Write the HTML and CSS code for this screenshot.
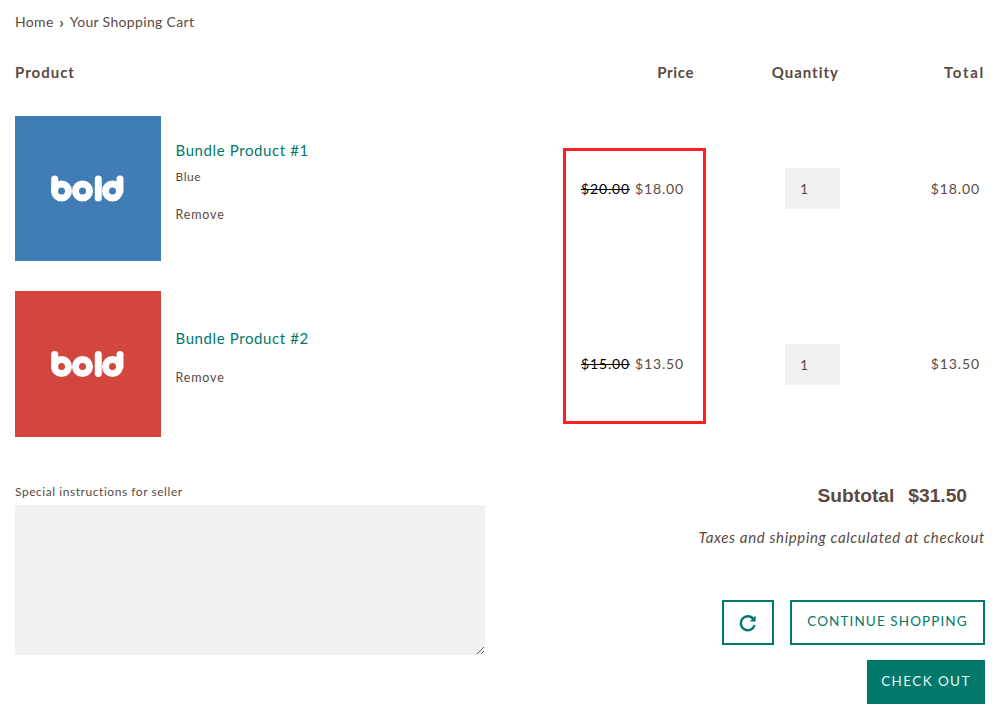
FILE: index.html
```html
<!DOCTYPE html>
<html lang="en">
<head>
<meta charset="utf-8">
<title>Your Shopping Cart</title>
<link rel="stylesheet" href="styles.css">
</head>
<body>
<main class="page">
  <nav class="crumbs"><a>Home</a><span class="sep">›</span><span>Your Shopping Cart</span></nav>
  <section class="cart">
    <div class="head">Product</div>
    <div class="head right price-head">Price</div>
    <div class="head right qty-head">Quantity</div>
    <div class="head right total-head">Total</div>

    <div class="product">
      <svg class="thumb blue" viewBox="0 0 146 145" role="img" aria-label="bold logo">
        <g class="logo">
          <circle cx="46.5" cy="75" r="7"/><line x1="39.7" y1="63" x2="39.7" y2="75"/>
          <circle cx="67.5" cy="75" r="7"/>
          <line x1="83.3" y1="63" x2="83.3" y2="82"/>
          <circle cx="97.5" cy="75" r="7"/><line x1="105" y1="63" x2="105" y2="75"/>
        </g>
      </svg>
      <div class="info">
        <a class="name">Bundle Product #1</a>
        <div class="variant">Blue</div>
        <a class="remove">Remove</a>
      </div>
    </div>
    <div class="price"><s>$20.00</s> <span>$18.00</span></div>
    <div class="qty"><input class="qty-input" value="1" aria-label="Quantity"></div>
    <div class="total">$18.00</div>

    <div class="product">
      <svg class="thumb red" viewBox="0 0 146 145" role="img" aria-label="bold logo">
        <g class="logo">
          <circle cx="46.5" cy="75" r="7"/><line x1="39.7" y1="63" x2="39.7" y2="75"/>
          <circle cx="67.5" cy="75" r="7"/>
          <line x1="83.3" y1="63" x2="83.3" y2="82"/>
          <circle cx="97.5" cy="75" r="7"/><line x1="105" y1="63" x2="105" y2="75"/>
        </g>
      </svg>
      <div class="info">
        <a class="name">Bundle Product #2</a>
        <a class="remove">Remove</a>
      </div>
    </div>
    <div class="price"><s>$15.00</s> <span>$13.50</span></div>
    <div class="qty"><input class="qty-input" value="1" aria-label="Quantity"></div>
    <div class="total">$13.50</div>

    <div class="highlight"></div>
  </section>

  <section class="foot">
    <div class="note">
      <label class="note-label" for="note">Special instructions for seller</label>
      <textarea id="note" class="note-box"></textarea>
    </div>
    <div class="summary">
      <div class="subtotal"><span>Subtotal</span><span>$31.50</span></div>
      <p class="taxes">Taxes and shipping calculated at checkout</p>
      <div class="actions">
        <button class="btn icon-btn" aria-label="Update cart">
          <svg class="refresh" viewBox="0 0 18 18">
            <path d="M14.6 5.2A7 7 0 1 0 15.6 11"/>
            <polygon points="16.6,1.4 16.6,7.4 10.6,7.4"/>
          </svg>
        </button>
        <button class="btn wide">Continue Shopping</button>
      </div>
      <button class="btn solid">Check Out</button>
    </div>
  </section>
</main>
</body>
</html>
```
FILE: styles.css
```css
* { box-sizing: border-box; }
html, body { margin: 0; padding: 0; background: #fff; }
body {
  font-family: "Lato", "Liberation Sans", sans-serif;
  color: #5a4a42;
  font-size: 14px;
}
.page { position: relative; padding: 0 20px 0 15px; height: 717px; overflow: hidden; }
.crumbs { display: flex; gap: 3px; height: 57px; padding-top: 13px; line-height: 18px; font-size: 14px; letter-spacing: .33px; }
.sep { font-weight: 700; font-size: 16px; width: 10px; text-align: center; }
.cart {
  position: relative;
  display: grid;
  grid-template-columns: 525px 154px 146px 145px;
  grid-template-rows: 29px 145px 146px;
  row-gap: 30px;
}
.head { font-weight: 700; font-size: 15px; letter-spacing: 1px; line-height: 20px; padding-top: 5px; }
.right { text-align: right; }
.price-head { letter-spacing: .6px; }
.qty-head { padding-right: 1px; }
.total-head { letter-spacing: 1.7px; }
.product { display: flex; align-items: center; gap: 14.5px; }
.thumb { display: block; width: 146px; height: 100%; flex: none; }
.blue { background: #407cb6; }
.red { background: #d2463f; }
.logo { fill: none; stroke: #fff; stroke-width: 7; stroke-linecap: round; }
.info { display: flex; flex-direction: column; align-items: flex-start; padding-bottom: 15px; }
.name { color: #00796b; font-size: 15px; letter-spacing: .6px; line-height: 20px; }
.variant { font-size: 12px; letter-spacing: .5px; line-height: 16px; margin-top: 9px; }
.remove { font-size: 12.5px; letter-spacing: .85px; line-height: 16px; margin-top: 22px; }
.price, .total, .qty { display: flex; align-items: center; justify-content: flex-end; }
.price { gap: 5px; padding: 0 10px 1px 0; font-size: 14px; letter-spacing: .85px; }
.price s { color: #000; }
.total { padding: 0 5px 1px 0; font-size: 14px; letter-spacing: .9px; }
.qty-input {
  width: 55px; height: 41px; border: 0; padding: 0 0 0 15px; margin: 0;
  background: #f1f1f1; color: #5a4a42; font: inherit; font-size: 14px;
}
.highlight {
  position: absolute; left: 548px; top: 91px; width: 143px; height: 276px;
  border: 3px solid #ff2020;
}
.foot { display: flex; justify-content: space-between; margin-top: 47px; }
.note { width: 470px; }
.note-label { display: block; font-size: 12px; letter-spacing: .55px; line-height: 16px; height: 21px; }
.note-box { display: block; width: 470px; height: 150px; border: 0; margin: 0; background: #f1f1f1; }
.summary { display: flex; flex-direction: column; align-items: flex-end; width: 400px; padding-top: 1px; }
.subtotal {
  display: flex; gap: 14px; margin-right: 18px;
  font-family: "Liberation Sans", Arial, sans-serif; font-weight: 700; font-size: 19.2px; line-height: 22px;
}
.taxes { margin: 20px 0 0; font-style: italic; font-size: 15px; letter-spacing: .64px; line-height: 20px; }
.actions { display: flex; gap: 16px; margin-top: 53px; }
.btn {
  height: 45px; padding: 0 15px; border: 2px solid #00796b; border-radius: 0; background: #fff;
  color: #00796b; font-family: inherit; font-size: 13.5px; letter-spacing: 1.1px; text-transform: uppercase;
}
.wide { width: 195px; padding: 0 0 3px; }
.icon-btn { width: 52px; padding: 0; display: flex; align-items: center; justify-content: center; }
.refresh { width: 18px; height: 18px; }
.refresh path { fill: none; stroke: #00796b; stroke-width: 2.4; }
.refresh polygon { fill: #00796b; }
.solid { margin-top: 15px; height: 44px; width: 118px; padding: 0 0 2px; letter-spacing: 1.4px; background: #00796b; color: #e8f4f2; border-color: #00796b; }
```
